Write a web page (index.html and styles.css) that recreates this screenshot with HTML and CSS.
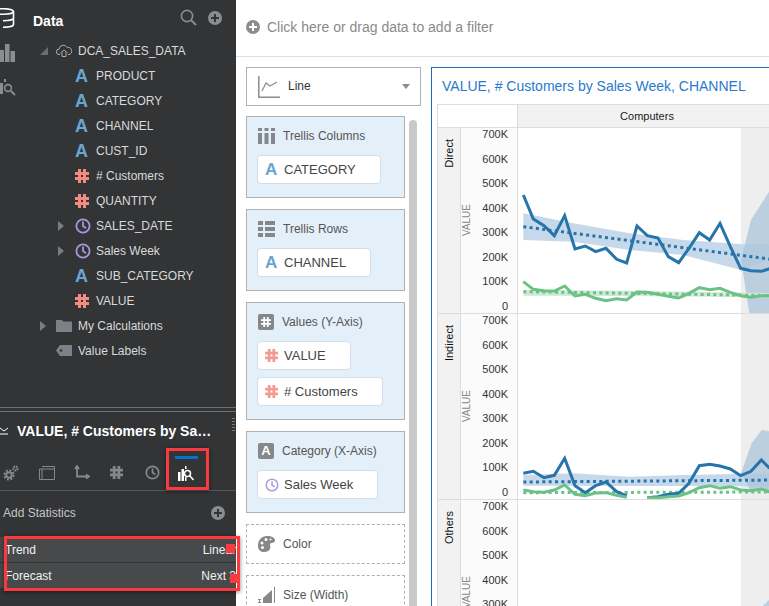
FILE: index.html
```html
<!DOCTYPE html>
<html lang="en">
<head>
  <meta charset="UTF-8" />
  <title>VALUE, # Customers by Sales Week, CHANNEL</title>
  <link rel="stylesheet" href="styles.css">
</head>
<body>
  <svg class="defs" width="0" height="0">
    <symbol id="i-hash" viewBox="0 0 14 14">
      <path d="M4.5 0v14M9.5 0v14M0 4.5h14M0 9.5h14" fill="none" stroke="currentColor" stroke-width="3"/>
    </symbol>
    <symbol id="i-clock" viewBox="0 0 16 16">
      <circle cx="8" cy="8" r="6.6" fill="none" stroke="currentColor" stroke-width="1.8"/>
      <path d="M8 3.6V8l3 2.2" fill="none" stroke="currentColor" stroke-width="1.8"/>
    </symbol>
    <symbol id="i-plus" viewBox="0 0 14 14">
      <circle cx="7" cy="7" r="7" fill="currentColor"/>
      <path d="M7 3v8M3 7h8" stroke="#fff" stroke-width="2"/>
    </symbol>
    <symbol id="i-plus-dark" viewBox="0 0 14 14">
      <circle cx="7" cy="7" r="7" fill="currentColor"/>
      <path d="M7 3v8M3 7h8" stroke="#333436" stroke-width="2"/>
    </symbol>
    <symbol id="i-twist" viewBox="0 0 6 10"><path d="M0 0l6 5-6 5z" fill="currentColor"/></symbol>
  </svg>

  <div class="side">
    <div class="data-panel">
      <div class="rail">
        <svg width="16" height="20" viewBox="0 0 16 20"><g fill="none" stroke="#fff" stroke-width="1.6"><ellipse cx="3" cy="3.5" rx="10.5" ry="2.8"/><path d="M13.5 3.5v13c0 1.600-4.700 2.800-10.500 2.800M13.500 10c0 1.600-4.700 2.800-10.500 2.800"/></g></svg>
        <svg width="16" height="18" viewBox="0 0 16 18"><path d="M0 6h4v12H0zM5 0h4.500v18H5zM10.500 7H15v11h-4.500z" fill="#8b8d8f"/></svg>
        <svg width="16" height="18" viewBox="0 0 16 18"><g fill="#8b8d8f"><path d="M0 5h3v11H0zM4 1h2v3H4z"/></g><circle cx="8" cy="10" r="3.400" fill="none" stroke="#8b8d8f" stroke-width="1.600"/><path d="M11 13l4 4" stroke="#8b8d8f" stroke-width="1.800"/></svg>
      </div>
      <div class="data-col">
        <div class="data-head">
          <span class="data-title">Data</span>
          <svg class="ic-search" width="17" height="17" viewBox="0 0 17 17"><circle cx="7" cy="7" r="5.600" fill="none" stroke="currentColor" stroke-width="1.600"/><path d="M11 11l5 5" stroke="currentColor" stroke-width="2"/></svg>
          <svg class="ic-add" width="14" height="14"><use href="#i-plus-dark"/></svg>
        </div>
        <div class="node top">
          <span class="twist"><svg width="8" height="8" viewBox="0 0 8 8"><path d="M8 0v8H0z" fill="#6a6c6e"/></svg></span>
          <span class="slot"><svg width="16" height="13" viewBox="0 0 16 13"><path d="M4 10.500H3A2.600 2.600 0 0 1 3 5.200 4.400 4.400 0 0 1 11.300 3.600 3.500 3.500 0 0 1 13 10.500h-1M4.500 9L8 6l3.500 3M6 8.500v4h4v-4" fill="none" stroke="#a9abad" stroke-width="1"/></svg></span>
          DCA_SALES_DATA
        </div>
        <div class="node child"><span class="twist"></span><span class="slot"><span class="ic-a">A</span></span>PRODUCT</div>
        <div class="node child"><span class="twist"></span><span class="slot"><span class="ic-a">A</span></span>CATEGORY</div>
        <div class="node child"><span class="twist"></span><span class="slot"><span class="ic-a">A</span></span>CHANNEL</div>
        <div class="node child"><span class="twist"></span><span class="slot"><span class="ic-a">A</span></span>CUST_ID</div>
        <div class="node child"><span class="twist"></span><span class="slot"><svg class="ic-num" width="14" height="14"><use href="#i-hash"/></svg></span># Customers</div>
        <div class="node child"><span class="twist"></span><span class="slot"><svg class="ic-num" width="14" height="14"><use href="#i-hash"/></svg></span>QUANTITY</div>
        <div class="node child"><span class="twist"><svg class="ic-tw" width="6" height="10"><use href="#i-twist"/></svg></span><span class="slot"><svg class="ic-time" width="16" height="16"><use href="#i-clock"/></svg></span>SALES_DATE</div>
        <div class="node child"><span class="twist"><svg class="ic-tw" width="6" height="10"><use href="#i-twist"/></svg></span><span class="slot"><svg class="ic-time" width="16" height="16"><use href="#i-clock"/></svg></span>Sales Week</div>
        <div class="node child"><span class="twist"></span><span class="slot"><span class="ic-a">A</span></span>SUB_CATEGORY</div>
        <div class="node child"><span class="twist"></span><span class="slot"><svg class="ic-num" width="14" height="14"><use href="#i-hash"/></svg></span>VALUE</div>
        <div class="node top">
          <span class="twist"><svg class="ic-tw" width="6" height="10"><use href="#i-twist"/></svg></span>
          <span class="slot"><svg width="16" height="12" viewBox="0 0 16 12"><path d="M0 0h6l1.500 1.500H16V12H0z" fill="#7d8185"/></svg></span>
          My Calculations
        </div>
        <div class="node top">
          <span class="twist"></span>
          <span class="slot"><svg width="16" height="11" viewBox="0 0 16 11"><path d="M4 0h12v11H4L0 5.500z" fill="#7d8185"/><circle cx="5" cy="5.500" r="1.300" fill="#333436"/></svg></span>
          Value Labels
        </div>
      </div>
    </div>

    <div class="props">
      <div class="props-head">
        <svg width="9" height="8" viewBox="0 0 9 8"><path d="M0 1l4 3 4-3M0 7h8" fill="none" stroke="#fff" stroke-width="1"/></svg>
        <span class="props-title">VALUE, # Customers by Sales Week, CHANNEL</span>
        <span class="grip"></span>
      </div>
      <div class="tabs">
        <span class="tab"><svg width="16" height="16" viewBox="0 0 16 16"><circle cx="6" cy="10" r="4.600" fill="none" stroke="#85878a" stroke-width="2" stroke-dasharray="2 1.600"/><circle cx="6" cy="10" r="2.800" fill="none" stroke="#85878a" stroke-width="2"/><circle cx="12.500" cy="3.500" r="2" fill="none" stroke="#85878a" stroke-width="2.200" stroke-dasharray="1.500 .7"/></svg></span>
        <span class="tab"><svg width="16" height="14" viewBox="0 0 16 14"><path d="M3 .5h12.500V13.500H.5V3M.5 3h15M3 3v10.500" fill="none" stroke="#85878a" stroke-width="1"/></svg></span>
        <span class="tab"><svg width="16" height="15" viewBox="0 0 16 15"><path d="M3 1.500v10h10M1 4l2-3 2 3M12 9.500l3 2-3 2" fill="none" stroke="#85878a" stroke-width="1.800"/></svg></span>
        <span class="tab"><svg class="ic-grey" width="13" height="13"><use href="#i-hash"/></svg></span>
        <span class="tab"><svg class="ic-grey" width="15" height="15"><use href="#i-clock"/></svg></span>
        <span class="tab on"><svg width="16" height="15" viewBox="0 0 16 15"><path d="M0 6h2.500v9H0zM3.500 3H6v12H3.500zM7 0h1.500v3H7z" fill="#fff"/><circle cx="9.500" cy="7.500" r="3" fill="none" stroke="#fff" stroke-width="1.500"/><path d="M12 10l3.500 4" stroke="#fff" stroke-width="1.600"/><path d="M7 11h1.500v4H7z" fill="#fff"/></svg></span>
      </div>
      <div class="stat-add">
        <span>Add Statistics</span>
        <svg class="ic-add" width="14" height="14"><use href="#i-plus-dark"/></svg>
      </div>
      <div class="stat-row"><span>Trend</span><span class="stat-val">Linear</span></div>
      <div class="stat-row"><span>Forecast</span><span class="stat-val">Next 3</span></div>
    </div>

    <div class="mark mark-tab"></div>
    <div class="mark mark-rows"></div>
    <div class="mark-dot dot-one"></div>
    <div class="mark-dot dot-two"></div>
  </div>

  <div class="main">
    <div class="filter-bar">
      <svg class="ic-filter" width="14" height="14"><use href="#i-plus"/></svg>
      Click here or drag data to add a filter
    </div>
    <div class="work">
      <div class="grammar">
        <div class="chart-type">
          <svg width="22" height="22" viewBox="0 0 22 22"><path d="M.8 0v21.200H22" fill="none" stroke="#8b8d8f" stroke-width="1.500"/><path d="M4 15l4-8 4 3 7-4" fill="none" stroke="#8b8d8f" stroke-width="1.200"/></svg>
          <span class="type-name">Line</span>
          <span class="caret"></span>
        </div>
        <div class="drops">
          <div class="boxes">
            <div class="box">
              <div class="box-head"><svg width="17" height="16" viewBox="0 0 17 16"><path d="M0 0h4v3H0zM6.500 0h4v3h-4zM13 0h4v3h-4zM0 5h4v11H0zM6.500 5h4v11h-4zM13 5h4v11h-4z" fill="#85878a"/></svg>Trellis Columns</div>
              <span class="chip"><span class="ic-a">A</span>CATEGORY</span>
            </div>
            <div class="box">
              <div class="box-head"><svg width="17" height="16" viewBox="0 0 17 16"><path d="M0 0h5v4H0zM7 0h10v4H7zM0 6h5v4H0zM7 6h10v4H7zM0 12h5v4H0zM7 12h10v4H7z" fill="#85878a"/></svg>Trellis Rows</div>
              <span class="chip"><span class="ic-a">A</span>CHANNEL</span>
            </div>
            <div class="box">
              <div class="box-head"><span class="square"><svg width="10" height="10" viewBox="0 0 14 14"><path d="M4.500 0v14M9.500 0v14M0 4.500h14M0 9.500h14" fill="none" stroke="#fff" stroke-width="2.500"/></svg></span>Values (Y-Axis)</div>
              <span class="chip"><svg class="ic-num" width="13" height="13"><use href="#i-hash"/></svg>VALUE</span>
              <span class="chip"><svg class="ic-num" width="13" height="13"><use href="#i-hash"/></svg># Customers</span>
            </div>
            <div class="box">
              <div class="box-head"><span class="square">A</span>Category (X-Axis)</div>
              <span class="chip"><svg class="ic-time" width="14" height="14"><use href="#i-clock"/></svg>Sales Week</span>
            </div>
            <div class="box empty">
              <svg width="17" height="16" viewBox="0 0 17 16"><path d="M9 0c5 0 8 2 8 4.500 0 3-5 1.500-5 4 0 2 1 2.500 0 4.500-1 2-3 3-6 3-4 0-6-2.500-6-6.500C0 4 4 0 9 0z" fill="#85878a"/><g fill="#fff"><circle cx="4" cy="7" r="1.500"/><circle cx="8" cy="3.500" r="1.500"/><circle cx="4.500" cy="11.500" r="1.500"/><circle cx="12.500" cy="3.500" r="1"/></g></svg>
              Color
            </div>
            <div class="box empty">
              <svg width="17" height="16" viewBox="0 0 17 16"><path d="M5 11l9-8v13H5zM16 0h1v16h-1zM0 12h3v1H2v2h1v1H0v-1h1v-2H0z" fill="#85878a"/></svg>
              Size (Width)
            </div>
          </div>
          <div class="scroll"></div>
        </div>
      </div>

      <div class="card">
        <div class="card-title">VALUE, # Customers by Sales Week, CHANNEL</div>
        <div class="trellis">
          <div class="corner"></div>
          <div class="col-head">Computers</div>

          <div class="row-name"><span>Direct</span></div>
          <div class="axis">
            <span class="axis-title">VALUE</span>
            <div class="ticks"><span>700K</span><span>600K</span><span>500K</span><span>400K</span><span>300K</span><span>200K</span><span>100K</span><span>0</span></div>
          </div>
          <svg class="plot" width="258" height="186" viewBox="264 204 774 555">
            <rect class="fc-bg" x="933" y="204" width="110" height="555"/>
            <path class="band-b" d="M280 460L430 490 600 520 760 540 930 552 1040 555V590L933 630 760 585 600 570 430 545 280 540z"/>
            <path class="band-f" d="M933 600L963 480 1017 395 1040 380V759H958z"/>
            <path class="band-g" d="M280 690L600 692 1040 700V712L600 708 280 707z"/>
            <path class="trend-b" d="M280 500L1040 600"/>
            <path class="trend-g" d="M280 695L1040 707"/>
            <path class="line-b" d="M280 405L310 477 342 497 373 527 404 467 435 567 466 558 497 575 528 565 560 598 590 609 621 498 652 527 684 534 715 590 746 608 777 565 808 518 839 540 870 490 901 560 932 625 963 632 994 634 1017 627 1040 615"/>
            <path class="line-g" d="M280 665L310 688 342 692 373 693 404 678 435 708 466 703 497 715 528 722 560 716 590 720 621 696 652 697 684 703 715 709 746 714 777 700 808 683 839 689 870 685 901 697 932 707 963 712 994 707 1017 707 1040 705"/>
          </svg>

          <div class="row-name"><span>Indirect</span></div>
          <div class="axis">
            <span class="axis-title">VALUE</span>
            <div class="ticks"><span>700K</span><span>600K</span><span>500K</span><span>400K</span><span>300K</span><span>200K</span><span>100K</span><span>0</span></div>
          </div>
          <svg class="plot" width="258" height="186" viewBox="264 12 774 555">
            <rect class="fc-bg" x="933" y="12" width="110" height="555"/>
            <path class="band-b" d="M280 495L430 490 600 500 760 495 1040 490V530L760 528 600 528 430 527 280 527z"/>
            <path class="band-f" d="M933 490L965 400 995 360 1040 368V540H960z"/>
            <path class="trend-b" d="M280 516L1040 510"/>
            <path class="trend-g" d="M280 548L1040 546"/>
            <path class="line-b" d="M280 490L310 484 342 503 373 496 404 445 435 527 466 548 497 527 528 516 560 545 590 558M652 563L684 560 715 553 746 550 777 520 808 467 839 463 870 468 901 477 932 497 963 484 994 450 1017 473 1040 480"/>
            <path class="line-g" d="M280 540L310 545 342 547 373 540 404 525 435 553 466 557 497 549 528 548 560 556 590 562M652 563L684 563 715 560 746 558 777 548 808 533 839 527 870 535 901 530 932 540 963 542 994 537 1017 545 1040 545"/>
          </svg>

          <div class="row-name"><span>Others</span></div>
          <div class="axis">
            <span class="axis-title">VALUE</span>
            <div class="ticks"><span>700K</span><span>600K</span><span>500K</span><span>400K</span><span>300K</span><span>200K</span><span>100K</span><span>0</span></div>
          </div>
          <svg class="plot" width="258" height="186" viewBox="264 570 774 555">
            <rect class="fc-bg" x="933" y="570" width="110" height="555"/>
            <path class="band-f" d="M985 900L1017 870 1040 860V1100H985z"/>
          </svg>
        </div>
      </div>
    </div>
  </div>
</body>
</html>
```

FILE: styles.css
```css
* { box-sizing: border-box; }
html, body { height: 100%; }
body {
  margin: 0;
  display: flex;
  height: 606px;
  overflow: hidden;
  font-family: "Liberation Sans", Arial, sans-serif;
  font-size: 12px;
  background: #fff;
}
.defs { position: absolute; }

/* left dark side */
.side {
  position: relative;
  flex: none;
  width: 236px;
  height: 606px;
  background: #333436;
  color: #d9dadb;
}
.data-panel {
  display: flex;
  height: 408px;
  border-bottom: 1px solid #6e6f71;
}
.rail {
  flex: none;
  width: 33px;
  padding-top: 8px;
  display: flex;
  flex-direction: column;
  gap: 16px;
}
.rail svg { display: block; }
.data-col { flex: 1; }
.data-head {
  display: flex;
  align-items: center;
  height: 38px;
  padding-right: 14px;
  color: #8a8c8e;
}
.data-title { flex: 1; font-size: 14px; font-weight: bold; color: #fff; padding-top: 4px; }
.ic-search { margin-right: 11px; margin-top: -3px; }
.ic-add { color: #8a8c8e; }
.data-head .ic-add { margin-top: -3px; }

.node {
  display: flex;
  align-items: center;
  height: 25px;
  white-space: nowrap;
}
.node.top { padding-left: 7px; }
.node.child { padding-left: 25px; }
.twist { flex: none; width: 16px; display: flex; }
.node.child .twist { width: 17px; }
.slot { flex: none; width: 22px; display: flex; align-items: center; }
.node.child .slot { width: 21px; }
.ic-tw { color: #7b7e80; }
.ic-a {
  font-size: 18px;
  line-height: 18px;
  font-weight: bold;
  color: #6aa5d2;
}
.ic-num { color: #f28b82; }
.ic-time { color: #a996dd; }

.props { margin-top: 3px; border-top: 1px solid #6e6f71; }
.props-head {
  display: flex;
  align-items: center;
  height: 38px;
  padding-right: 24px;
}
.props-head svg { flex: none; margin-right: 8px; }
.props-title {
  flex: 1;
  min-width: 0;
  overflow: hidden;
  white-space: nowrap;
  text-overflow: ellipsis;
  font-size: 14px;
  font-weight: bold;
  color: #fff;
}
.grip {
  position: absolute;
  right: 1px;
  top: 418px;
  width: 3px;
  height: 15px;
  background: repeating-linear-gradient(#77797b 0 1px, transparent 1px 3px);
}
.tabs {
  display: flex;
  height: 41px;
  padding-left: 3px;
  border-bottom: 1px solid #55575a;
}
.tab {
  width: 35.5px;
  display: flex;
  align-items: center;
  padding-top: 5px;
  color: #85878a;
}
.tab.on {
  position: relative;
  margin-left: -3px;
  padding-top: 7px;
}
.tab.on::before {
  content: "";
  position: absolute;
  left: -3px;
  top: 6px;
  width: 23px;
  height: 3px;
  background: #0572ce;
}
.ic-grey { color: #85878a; }
.stat-add {
  display: flex;
  align-items: center;
  justify-content: space-between;
  height: 44px;
  padding: 0 11px 0 3px;
  color: #c5c6c8;
}
.stat-row {
  display: flex;
  justify-content: space-between;
  align-items: center;
  height: 25px;
  margin-top: 1px;
  padding: 0 0 0 5px;
  background: #47494b;
  color: #f2f2f2;
  white-space: nowrap;
  overflow: hidden;
}
.stat-add + .stat-row { margin-top: 2px; }

/* red annotations drawn over the panel */
.mark {
  position: absolute;
  border: 3px solid #fb3a40;
  box-shadow: 0 1px 4px rgba(0,0,0,.5);
}
.mark-tab { left: 166px; top: 448px; width: 43px; height: 42px; }
.mark-rows { left: 4px; top: 536px; width: 236px; height: 55px; z-index: 2; }
.mark-dot { position: absolute; background: #fb3a40; z-index: 2; }
.dot-one { left: 226px; top: 544px; width: 9px; height: 9px; }
.dot-two { left: 230px; top: 574px; width: 10px; height: 9px; }

/* right side */
.main { flex: 1; min-width: 0; overflow: hidden; }
.filter-bar {
  display: flex;
  align-items: center;
  height: 57px;
  padding: 0 0 2px 10px;
  border-bottom: 1px solid #d8dfe5;
  font-size: 14px;
  color: #8a8a8a;
}
.ic-filter { color: #8a8c8e; margin-right: 7px; }
.work { display: flex; }
.grammar { flex: none; width: 195px; padding: 10px 0 0 10px; }
.chart-type {
  display: flex;
  align-items: center;
  width: 175px;
  height: 39px;
  padding: 0 10px 0 11px;
  border: 1px solid #b1b1b1;
  color: #333;
}
.type-name { flex: 1; padding: 0 0 2px 8px; }
.caret {
  width: 0;
  height: 0;
  border: 4px solid transparent;
  border-top: 5px solid #8a8c8e;
  border-bottom: 0;
}
.drops { display: flex; gap: 4px; margin-top: 10px; }
.boxes { flex: none; width: 159px; }
.box {
  margin-bottom: 11px;
  padding: 9px 10px 13px;
  border: 1px solid #b1b1b1;
  background: #e3eff9;
  color: #555;
}
.box-head {
  display: flex;
  align-items: center;
  gap: 8px;
  height: 19px;
  margin: 0 0 10px 1px;
}
.square {
  flex: none;
  width: 16px;
  height: 16px;
  display: flex;
  align-items: center;
  justify-content: center;
  border-radius: 2px;
  background: #85878a;
  color: #fff;
  font-size: 13px;
  font-weight: bold;
}
.chip {
  display: flex;
  align-items: center;
  gap: 6px;
  width: max-content;
  height: 29px;
  margin-top: 7px;
  padding: 0 24px 0 7px;
  border: 1px solid #d4dde5;
  border-radius: 4px;
  background: #fff;
  font-size: 13px;
  color: #444;
}
.box-head + .chip { margin-top: 0; }
.chip .ic-a { font-size: 17px; width: 13px; }
.chip .ic-num { opacity: .85; }
.chip .ic-time { opacity: .9; margin-right: -1px; }
.box.empty {
  display: flex;
  align-items: center;
  gap: 8px;
  height: 40px;
  padding: 0 11px;
  border: 1px dashed #b1b1b1;
  background: #fff;
}
.scroll {
  flex: none;
  width: 8px;
  height: 500px;
  margin-top: 4px;
  border-radius: 4px 4px 0 0;
  background: #c9c9c9;
}

.card {
  flex: none;
  width: 420px;
  height: 700px;
  margin-top: 10px;
  padding: 0 5px;
  border: 1px solid #1f6fbf;
}
.card-title {
  height: 36px;
  padding: 10px 0 0 5px;
  font-size: 14px;
  color: #2a7acb;
  white-space: nowrap;
}
.trellis {
  display: grid;
  grid-template-columns: 23px 57px 258px;
  grid-template-rows: 23px 186px 186px 186px;
  font-size: 11px;
  border-top: 1px solid #ddd;
  border-left: 1px solid #ddd;
}
.corner { grid-column: 1 / 3; border-right: 1px solid #ddd; border-bottom: 1px solid #ddd; }
.col-head {
  display: flex;
  align-items: center;
  justify-content: center;
  background: #f2f2f2;
  border-bottom: 1px solid #ddd;
  color: #222;
}
.row-name {
  display: flex;
  align-items: flex-start;
  justify-content: center;
  background: #f2f2f2;
  border-right: 1px solid #ddd;
  border-bottom: 1px solid #ddd;
  padding-top: 11px;
  color: #111;
}
.row-name span { writing-mode: vertical-rl; transform: rotate(180deg); }
.axis {
  display: flex;
  background: #fbfbfb;
  border-right: 1px solid #ddd;
  border-bottom: 1px solid #ddd;
}
.axis-title {
  flex: none;
  width: 13px;
  align-self: center;
  writing-mode: vertical-rl;
  transform: rotate(180deg);
  font-size: 10px;
  color: #8a8a8a;
}
.ticks {
  flex: 1;
  display: flex;
  flex-direction: column;
  justify-content: space-between;
  align-items: flex-end;
  padding: 0 9px 1px 0;
  color: #333;
}
.plot { display: block; background: #fff; border-bottom: 1px solid #ddd; }
.fc-bg { fill: #eeeeee; }
.band-b { fill: #c6d9ea; }
.band-f { fill: #a9c4da; opacity: .75; }
.band-g { fill: #cfe9d6; }
.line-b, .line-g, .trend-b, .trend-g { fill: none; }
.line-b { stroke: #2774ab; stroke-width: 9; }
.line-g { stroke: #6cc187; stroke-width: 9; }
.trend-b { stroke: #2774ab; stroke-width: 9; stroke-dasharray: 9 10; }
.trend-g { stroke: #6cc187; stroke-width: 9; stroke-dasharray: 9 10; }
```
